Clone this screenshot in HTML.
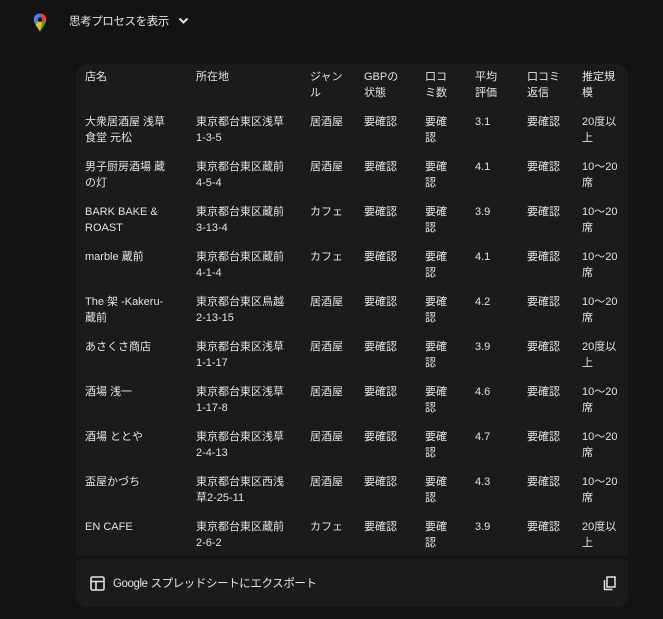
<!DOCTYPE html>
<html><head><meta charset="utf-8"><style>
body{margin:0;background:#131313;width:663px;height:619px;overflow:hidden;font-family:"Liberation Sans","Noto Sans CJK JP",sans-serif;color:#e3e3e3;font-size:11px;position:relative}
.card{position:absolute;left:76px;top:64px;width:552px;height:492px;background:#1b1b1b;border-radius:12px 12px 4px 4px}
.foot{position:absolute;left:76px;top:559px;width:552px;height:48px;background:#1b1b1b;border-radius:4px 4px 12px 12px}
.c{position:absolute;line-height:16px;white-space:nowrap}
</style></head><body>
<svg style="position:absolute;left:33px;top:13px" width="14" height="19" viewBox="0 0 14 19">
<path d="M7 0.5C3.4 0.5 0.8 3.2 0.8 6.6c0 4.3 6.2 11.8 6.2 11.8s6.2-7.5 6.2-11.8C13.2 3.2 10.6 0.5 7 0.5z" fill="#34a853"/>
<path d="M7 0.5C3.4 0.5 0.8 3.2 0.8 6.6c0 1.5 0.8 3.3 1.8 5L7 6.6z" fill="#4285f4"/>
<path d="M7 0.5c3.6 0 6.2 2.7 6.2 6.1 0 1-0.3 2-0.8 3.1L7 6.6z" fill="#ea4335"/>
<path d="M2.6 11.6C3.6 13.3 5 15 7 18.4L9 10 7 6.6z" fill="#fbbc04"/>
<circle cx="7" cy="6.6" r="2.3" fill="#1b1b1b"/></svg>
<div class="c" style="left:69px;top:14px;font-size:11.5px;letter-spacing:-0.4px">思考プロセスを表示</div>
<svg style="position:absolute;left:178px;top:17px" width="11" height="8" viewBox="0 0 11 8"><path d="M1.5 1.5l4 4 4-4" stroke="#e3e3e3" stroke-width="2" fill="none"/></svg>
<div class="card"></div>
<div class="foot"></div>
<div id="t"></div>
<svg style="position:absolute;left:90px;top:576px" width="15" height="15" viewBox="0 0 15 15"><rect x="1" y="1" width="13" height="13" rx="1.5" fill="none" stroke="#e3e3e3" stroke-width="1.6"/><path d="M1 5.5h13M6 5.5v8.5" stroke="#e3e3e3" stroke-width="1.6"/></svg>
<div class="c" style="left:113px;top:576px;font-size:11.5px;letter-spacing:-0.4px">Google スプレッドシートにエクスポート</div>
<svg style="position:absolute;left:603px;top:576px" width="13" height="15" viewBox="0 0 13 15"><rect x="4" y="1" width="8" height="10" fill="none" stroke="#e3e3e3" stroke-width="1.5"/><path d="M1.5 4v9.5h8" fill="none" stroke="#e3e3e3" stroke-width="1.5"/></svg>
<script>
var xs=[85,196,310,364,425,475,527,582];
var hd=["店名","所在地","ジャン<br>ル","GBPの<br>状態","口コ<br>ミ数","平均<br>評価","口コミ<br>返信","推定規<br>模"];
var rows=[
["大衆居酒屋 浅草<br>食堂 元松","東京都台東区浅草<br>1-3-5","居酒屋","3.1","20度以<br>上"],
["男子厨房酒場 蔵<br>の灯","東京都台東区蔵前<br>4-5-4","居酒屋","4.1","10～20<br>席"],
["BARK BAKE &amp;<br>ROAST","東京都台東区蔵前<br>3-13-4","カフェ","3.9","10～20<br>席"],
["marble 蔵前","東京都台東区蔵前<br>4-1-4","カフェ","4.1","10～20<br>席"],
["The 架 -Kakeru-<br>蔵前","東京都台東区鳥越<br>2-13-15","居酒屋","4.2","10～20<br>席"],
["あさくさ商店","東京都台東区浅草<br>1-1-17","居酒屋","3.9","20度以<br>上"],
["酒場 浅一","東京都台東区浅草<br>1-17-8","居酒屋","4.6","10～20<br>席"],
["酒場 ととや","東京都台東区浅草<br>2-4-13","居酒屋","4.7","10～20<br>席"],
["盃屋かづち","東京都台東区西浅<br>草2-25-11","居酒屋","4.3","10～20<br>席"],
["EN CAFE","東京都台東区蔵前<br>2-6-2","カフェ","3.9","20度以<br>上"]];
var h="";
hd.forEach(function(s,i){h+='<div class="c" style="left:'+xs[i]+'px;top:69px">'+s+'</div>';});
rows.forEach(function(r,j){var y=114+45*j;
var v=[r[0],r[1],r[2],"要確認","要確<br>認",r[3],"要確認",r[4]];
v.forEach(function(s,i){h+='<div class="c" style="left:'+xs[i]+'px;top:'+y+'px">'+s+'</div>';});});
document.getElementById("t").innerHTML=h;
</script>
</body></html>
